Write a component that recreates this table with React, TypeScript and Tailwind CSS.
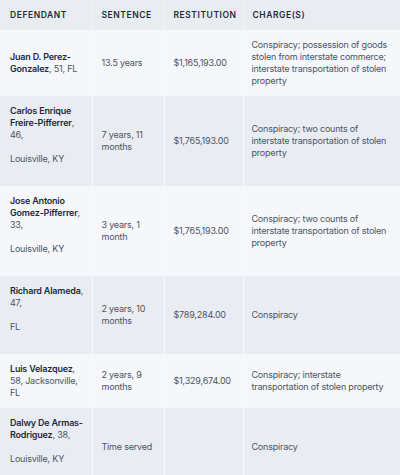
import React from "react";

type Row = {
  name: string;
  rest: string;
  place?: string;
  sentence: string;
  restitution: string;
  charges: string;
};

const rows: Row[] = [
  {
    name: "Juan D. Perez-Gonzalez",
    rest: ", 51, FL",
    sentence: "13.5 years",
    restitution: "$1,165,193.00",
    charges:
      "Conspiracy; possession of goods stolen from interstate commerce; interstate transportation of stolen property",
  },
  {
    name: "Carlos Enrique Freire-Pifferrer",
    rest: ", 46,",
    place: "Louisville, KY",
    sentence: "7 years, 11 months",
    restitution: "$1,765,193.00",
    charges: "Conspiracy; two counts of interstate transportation of stolen property",
  },
  {
    name: "Jose Antonio Gomez-Pifferrer",
    rest: ", 33,",
    place: "Louisville, KY",
    sentence: "3 years, 1 month",
    restitution: "$1,765,193.00",
    charges: "Conspiracy; two counts of interstate transportation of stolen property",
  },
  {
    name: "Richard Alameda",
    rest: ", 47,",
    place: "FL",
    sentence: "2 years, 10 months",
    restitution: "$789,284.00",
    charges: "Conspiracy",
  },
  {
    name: "Luis Velazquez",
    rest: ", 58, Jacksonville, FL",
    sentence: "2 years, 9 months",
    restitution: "$1,329,674.00",
    charges: "Conspiracy; interstate transportation of stolen property",
  },
  {
    name: "Dalwy De Armas-Rodriguez",
    rest: ", 38,",
    place: "Louisville, KY",
    sentence: "Time served",
    restitution: "",
    charges: "Conspiracy",
  },
];

const headers = ["Defendant", "Sentence", "Restitution", "Charge(s)"];

export default function App() {
  return (
    <div
      className="w-[400px] h-[475px] overflow-hidden bg-white"
      style={{ fontFamily: "Inter, 'Noto Sans', sans-serif" }}
    >
      <table className="w-[400px] table-fixed border-collapse text-[9px] leading-[12px] tracking-[-0.2px] text-[#4b5563]">
        <colgroup>
          <col className="w-[92px]" />
          <col className="w-[72px]" />
          <col className="w-[79px]" />
          <col className="w-[157px]" />
        </colgroup>
        <thead>
          <tr className="h-[30px] bg-[#e9edf2]">
            {headers.map((h, i) => (
              <th
                key={h}
                className={`${i === 0 ? "pl-[10px]" : "pl-[9px]"} pr-[4px] text-left align-middle text-[8.5px] font-semibold uppercase tracking-[0.55px] text-[#1f2a3c] ${
                  i < 3 ? "border-r border-[#f3f5f8]" : ""
                }`}
              >
                {h}
              </th>
            ))}
          </tr>
        </thead>
        <tbody>
          {rows.map((r, i) => (
            <tr key={r.name} className={i % 2 === 0 ? "bg-[#f5f7fa]" : "bg-[#e9edf3]"}>
              <td className="border-r border-[#f9fafc] pl-[10px] pr-[4px] py-[9px] align-middle">
                {r.place ? (
                  <>
                    <p className="mb-[12px]">
                      <span className="font-semibold text-[#1f2a3c]">{r.name}</span>
                      {r.rest}
                    </p>
                    <p className="mb-[12px]">{r.place}</p>
                  </>
                ) : (
                  <p>
                    <span className="font-semibold text-[#1f2a3c]">{r.name}</span>
                    {r.rest}
                  </p>
                )}
              </td>
              <td className="border-r border-[#f9fafc] px-[9px] py-[9px] align-middle">
                {r.sentence}
              </td>
              <td className="border-r border-[#f9fafc] pl-[9px] pr-[4px] py-[9px] align-middle">
                {r.restitution}
              </td>
              <td className="pl-[8px] pr-[12px] py-[9px] align-middle">{r.charges}</td>
            </tr>
          ))}
        </tbody>
      </table>
    </div>
  );
}
